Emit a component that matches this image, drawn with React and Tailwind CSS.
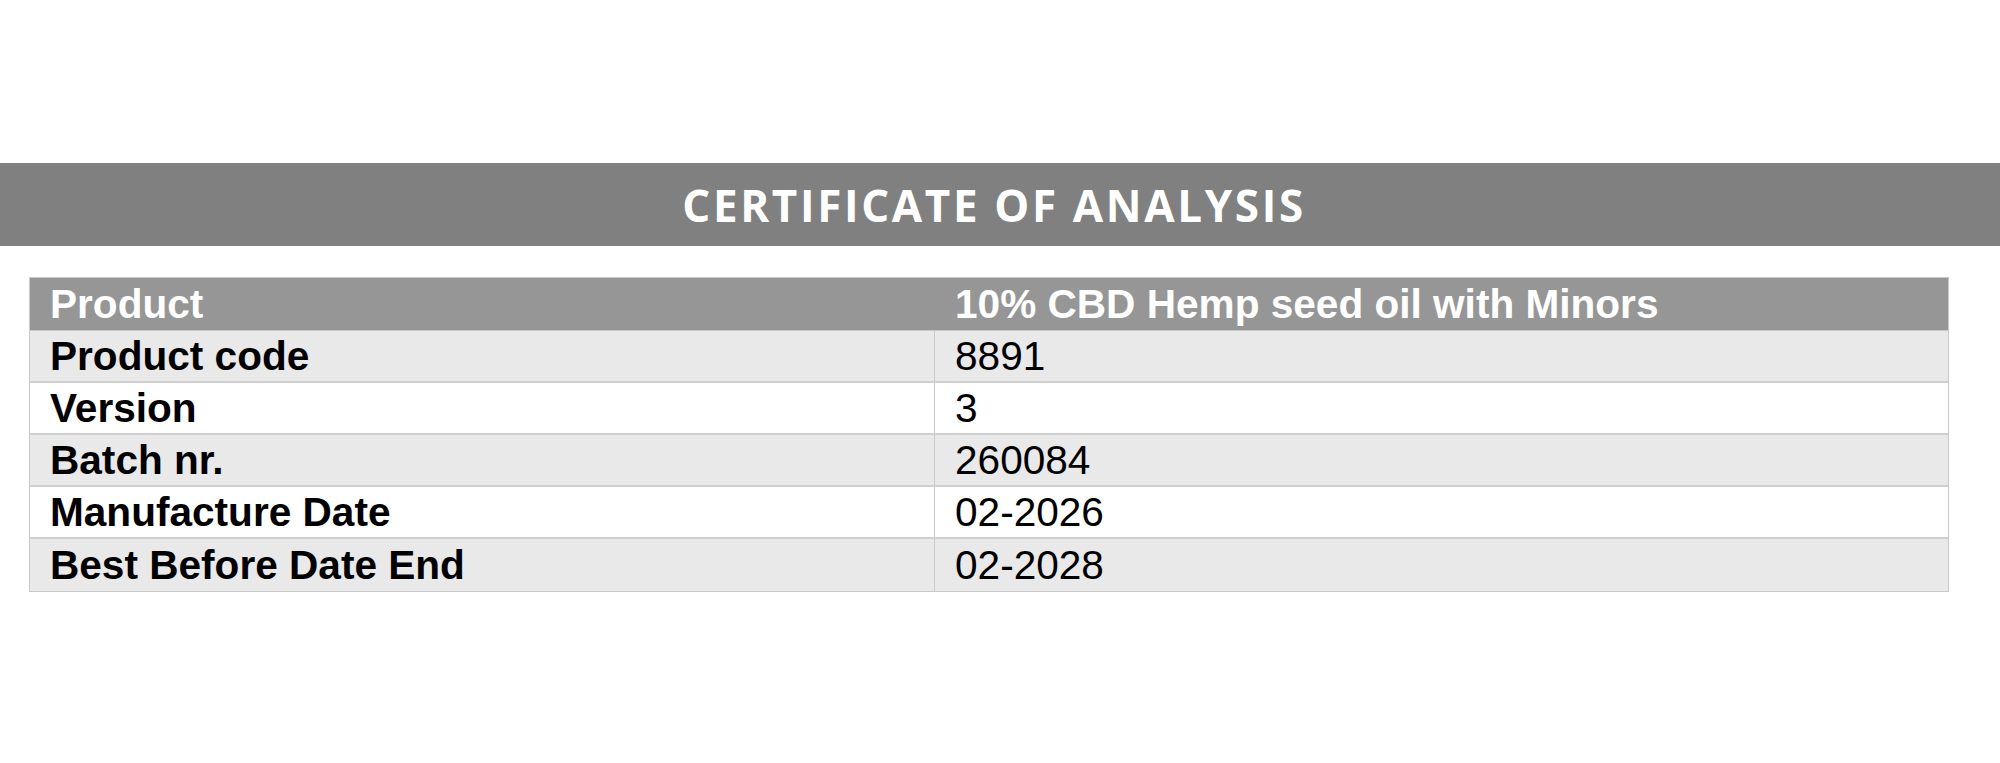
import React from "react";

const rows = [
  ["Product code", "8891"],
  ["Version", "3"],
  ["Batch nr.", "260084"],
  ["Manufacture Date", "02-2026"],
  ["Best Before Date End", "02-2028"],
];

export default function App() {
  return (
    <div className="w-[2000px] h-[763px] bg-white pt-[163px]">
      <div className="h-[83px] bg-[#808080] flex items-center justify-center">
        <h1
          className="text-white text-[44px] font-bold tracking-[0.06em] leading-none mr-[12px]"
          style={{ fontFamily: '"Open Sans", "Noto Sans", sans-serif' }}
        >
          CERTIFICATE OF ANALYSIS
        </h1>
      </div>
      <div
        className="mt-[31px] ml-[29px] w-[1920px] border border-[#c9c9c9] text-[40.6px] leading-none"
        style={{ fontFamily: '"Liberation Sans", Arial, sans-serif' }}
      >
        <div className="grid grid-cols-[905px_1fr] h-[53px] bg-[#969696] text-white font-bold border-b border-[#c9c9c9]">
          <div className="pl-[20px] flex items-center">Product</div>
          <div className="pl-[20px] flex items-center">10% CBD Hemp seed oil with Minors</div>
        </div>
        {rows.map(([k, v], i) => (
          <div
            key={k}
            className={`grid grid-cols-[905px_1fr] h-[52px] text-black ${
              i % 2 === 0 ? "bg-[#e9e9e9]" : "bg-white"
            } ${i < rows.length - 1 ? "border-b-2 border-[#cfcfcf]" : ""}`}
          >
            <div className="pl-[20px] flex items-center font-bold border-r border-[#c9c9c9]">{k}</div>
            <div className="pl-[20px] flex items-center">{v}</div>
          </div>
        ))}
      </div>
    </div>
  );
}
